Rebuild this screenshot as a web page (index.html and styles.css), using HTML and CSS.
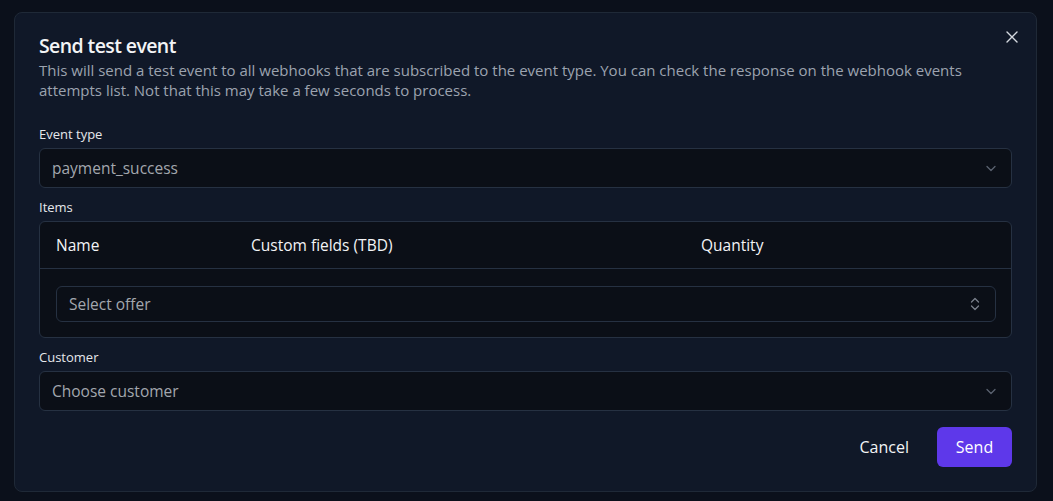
FILE: index.html
```html
<!DOCTYPE html>
<html>
<head>
<meta charset="utf-8">
<link rel="stylesheet" href="styles.css">
</head>
<body>
<div class="backdrop">
  <div class="modal">
    <button class="close" aria-label="Close">
      <svg width="14" height="14" viewBox="0 0 14 14"><path d="M2 2L12 12M12 2L2 12" stroke="#d5d9e0" stroke-width="1.4" stroke-linecap="round"/></svg>
    </button>
    <h2 class="title">Send test event</h2>
    <p class="desc">This will send a test event to all webhooks that are subscribed to the event type. You can check the response on the webhook events attempts list. Not that this may take a few seconds to process.</p>

    <div class="field field-first">
      <label class="label">Event type</label>
      <div class="select">
        <span class="value">payment_success</span>
        <svg class="chev" width="12" height="12" viewBox="0 0 12 12"><path d="M2 4.5L6 8.5L10 4.5" fill="none" stroke="#5b6270" stroke-width="1.3" stroke-linecap="round" stroke-linejoin="round"/></svg>
      </div>
    </div>

    <div class="field">
      <label class="label">Items</label>
      <div class="table">
        <div class="thead">
          <span class="th th-name">Name</span>
          <span class="th th-custom">Custom fields (TBD)</span>
          <span class="th th-qty">Quantity</span>
        </div>
        <div class="tbody">
          <div class="select small">
            <span class="value">Select offer</span>
            <svg class="chev" width="12" height="16" viewBox="0 0 12 16"><path d="M2.5 6L6 2.5L9.5 6M2.5 10L6 13.5L9.5 10" fill="none" stroke="#7a808c" stroke-width="1.3" stroke-linecap="round" stroke-linejoin="round"/></svg>
          </div>
        </div>
      </div>
    </div>

    <div class="field">
      <label class="label">Customer</label>
      <div class="select">
        <span class="value">Choose customer</span>
        <svg class="chev" width="12" height="12" viewBox="0 0 12 12"><path d="M2 4.5L6 8.5L10 4.5" fill="none" stroke="#5b6270" stroke-width="1.3" stroke-linecap="round" stroke-linejoin="round"/></svg>
      </div>
    </div>

    <div class="actions">
      <button class="btn-cancel">Cancel</button>
      <button class="btn-send">Send</button>
    </div>
  </div>
</div>
</body>
</html>
```

FILE: styles.css
```css
* { box-sizing: border-box; }
html, body { margin: 0; padding: 0; }
body {
  background: #0b101b;
  font-family: "Open Sans", "Liberation Sans", sans-serif;
  width: 1053px;
  height: 501px;
  overflow: hidden;
}
.backdrop {
  padding: 12px 16px 0 14px;
  height: 501px;
}
.modal {
  position: relative;
  background: #101828;
  border: 1px solid #1f2937;
  border-radius: 8px;
  height: 480px;
  padding: 19px 24px 0 24px;
}
.close {
  position: absolute;
  top: 17px;
  right: 17px;
  background: none;
  border: 0;
  padding: 0;
  width: 14px;
  height: 14px;
  display: flex;
}
.title {
  margin: 0;
  color: #f3f4f6;
  font-size: 19.5px;
  font-weight: 600;
  line-height: 28px;
  letter-spacing: -0.6px;
}
.desc {
  margin: 0;
  color: #9ca3af;
  font-size: 15px;
  line-height: 20px;
}
.field { display: flex; flex-direction: column; }
.field-first { margin-top: 25px; }
.field + .field { margin-top: 10px; }
.label {
  color: #e5e7eb;
  font-size: 13px;
  font-weight: 500;
  line-height: 18px;
  margin-bottom: 5px;
}
.select {
  height: 40px;
  background: #0b0f17;
  border: 1px solid #263142;
  border-radius: 6px;
  display: flex;
  align-items: center;
  justify-content: space-between;
  padding: 0 14px 0 12px;
}
.select .value {
  color: #a3a7ae;
  font-size: 15.5px;
}
.select.small { height: 36px; padding-right: 14px; }
.table {
  background: #0b0f17;
  border: 1px solid #263142;
  border-radius: 6px;
}
.thead {
  height: 47px;
  display: flex;
  align-items: center;
  border-bottom: 1px solid #263142;
  padding-left: 16px;
}
.th {
  color: #f3f4f6;
  font-size: 15.5px;
  font-weight: 500;
}
.th-name { width: 195px; }
.th-custom { width: 450px; }
.tbody { padding: 17px 15px 15px 16px; }
.actions {
  display: flex;
  justify-content: flex-end;
  align-items: center;
  margin-top: 16px;
  gap: 28px;
}
.btn-cancel {
  background: none;
  border: 0;
  color: #f3f4f6;
  font-family: inherit;
  font-size: 16px;
  font-weight: 500;
  padding: 0;
}
.btn-send {
  background: #5e38ea;
  border: 0;
  border-radius: 6px;
  color: #ffffff;
  font-family: inherit;
  font-size: 16px;
  font-weight: 500;
  width: 75px;
  height: 40px;
}
```
